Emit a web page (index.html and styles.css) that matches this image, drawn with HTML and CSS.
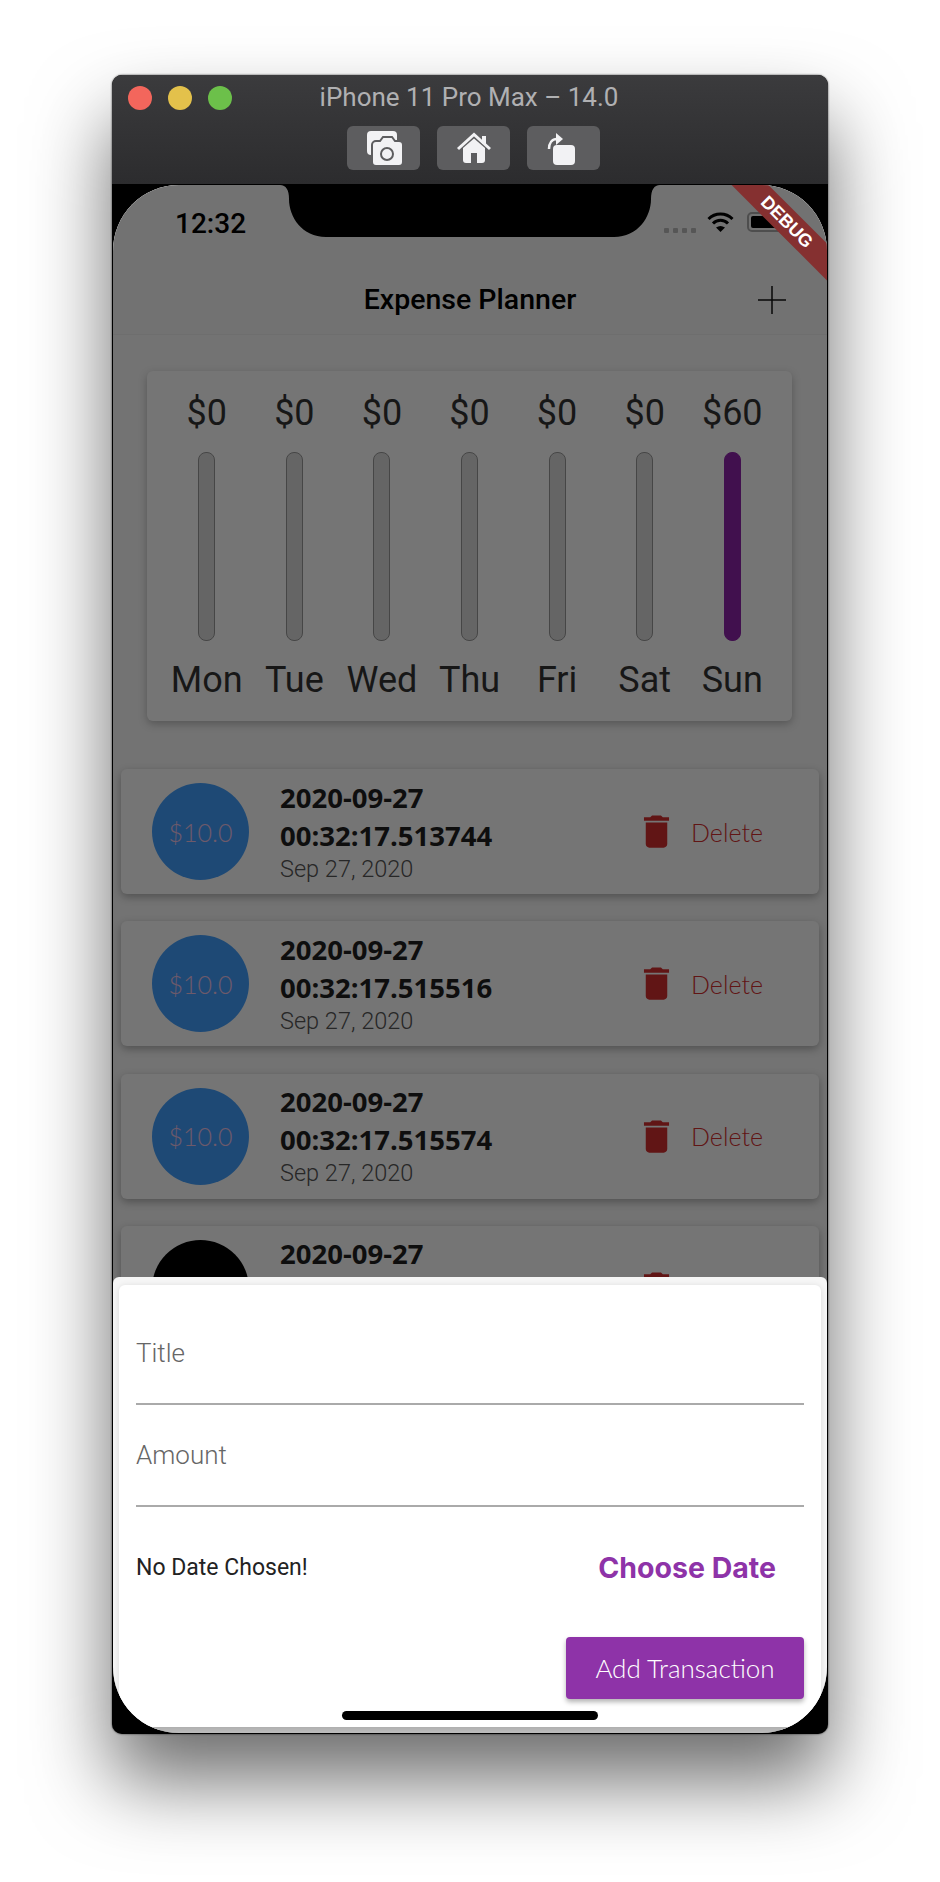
FILE: index.html
```html
<!DOCTYPE html>
<html lang="en">
<head>
    <meta charset="UTF-8">
    <title>iPhone 11 Pro Max – 14.0</title>
    <link rel="stylesheet" href="styles.css">
</head>
<body>
    <div class="window">
        <div class="titlebar">
            <div class="title-row">
                <div class="lights">
                    <span class="light red"></span>
                    <span class="light yellow"></span>
                    <span class="light green"></span>
                </div>
                <div class="sim-name">iPhone 11 Pro Max – 14.0</div>
            </div>
            <div class="sim-buttons">
                <button class="sim-btn">
                    <svg width="73" height="44" viewBox="0 0 73 44">
                        <rect x="20" y="5" width="30" height="24" rx="4" fill="#f2f2f4"/>
                        <path d="M29 15h4l3-4h9l3 4h4a4 4 0 0 1 4 4v17a4 4 0 0 1-4 4H29a4 4 0 0 1-4-4V19a4 4 0 0 1 4-4z" fill="#f2f2f4" stroke="#5d5d5f" stroke-width="2"/>
                        <circle cx="40" cy="28" r="6" fill="none" stroke="#5d5d5f" stroke-width="2"/>
                    </svg>
                </button>
                <button class="sim-btn">
                    <svg width="73" height="44" viewBox="0 0 73 44">
                        <rect x="45" y="10" width="4" height="8" fill="#f2f2f4"/>
                        <path d="M21 23L37 8.500L53 23" fill="none" stroke="#f2f2f4" stroke-width="3"/>
                        <path d="M26 22L37 12.500L48 22V34a3 3 0 0 1-3 3H29a3 3 0 0 1-3-3z" fill="#f2f2f4"/>
                        <rect x="34" y="27" width="6" height="10" fill="#5d5d5f"/>
                    </svg>
                </button>
                <button class="sim-btn">
                    <svg width="73" height="44" viewBox="0 0 73 44">
                        <rect x="26" y="19" width="22" height="20" rx="4" fill="#f2f2f4"/>
                        <path d="M22 23c0-6 3-10 8-10" fill="none" stroke="#f2f2f4" stroke-width="2.500"/>
                        <path d="M29 7l7 6-7 6z" fill="#f2f2f4"/>
                    </svg>
                </button>
            </div>
        </div>

        <div class="screen">
            <div class="status-bar">
                <span class="time">12:32</span>
                <div class="status-right">
                    <div class="signal"><i></i><i></i><i></i><i></i></div>
                    <svg class="wifi" width="27" height="20" viewBox="0 0 27 20">
                        <path d="M1.500 7A17 17 0 0 1 25.500 7" fill="none" stroke="#000" stroke-width="3"/>
                        <path d="M6 11.500A10.500 10.500 0 0 1 21 11.500" fill="none" stroke="#000" stroke-width="3"/>
                        <path d="M13.500 20L9 15.500Q13.500 12.500 18 15.500z" fill="#000"/>
                    </svg>
                    <div class="battery"><div class="battery-fill"></div></div>
                </div>
            </div>

            <header class="app-bar">
                <div class="app-title">Expense Planner</div>
                <svg class="add-icon" width="28" height="28" viewBox="0 0 28 28">
                    <path d="M14 0V28M0 14H28" stroke="#111" stroke-width="1.500"/>
                </svg>
            </header>

            <section class="chart">
                <div class="chart-col"><span class="amount">$0</span><div class="bar"></div><span class="day">Mon</span></div>
                <div class="chart-col"><span class="amount">$0</span><div class="bar"></div><span class="day">Tue</span></div>
                <div class="chart-col"><span class="amount">$0</span><div class="bar"></div><span class="day">Wed</span></div>
                <div class="chart-col"><span class="amount">$0</span><div class="bar"></div><span class="day">Thu</span></div>
                <div class="chart-col"><span class="amount">$0</span><div class="bar"></div><span class="day">Fri</span></div>
                <div class="chart-col"><span class="amount">$0</span><div class="bar"></div><span class="day">Sat</span></div>
                <div class="chart-col"><span class="amount">$60</span><div class="bar full"></div><span class="day">Sun</span></div>
            </section>

            <section class="tx-list">
                <div class="tx-card">
                    <div class="tx-circle">$10.0</div>
                    <div class="tx-text">
                        <div class="tx-title">2020-09-27<br>00:32:17.513744</div>
                        <div class="tx-date">Sep 27, 2020</div>
                    </div>
                    <div class="tx-delete">
                        <svg width="43" height="43" viewBox="0 0 24 24"><path d="M6 19c0 1.100.9 2 2 2h8c1.100 0 2-.9 2-2V7H6v12zM19 4h-3.500l-1-1h-5l-1 1H5v2h14V4z"/></svg>
                        <span>Delete</span>
                    </div>
                </div>
                <div class="tx-card">
                    <div class="tx-circle">$10.0</div>
                    <div class="tx-text">
                        <div class="tx-title">2020-09-27<br>00:32:17.515516</div>
                        <div class="tx-date">Sep 27, 2020</div>
                    </div>
                    <div class="tx-delete">
                        <svg width="43" height="43" viewBox="0 0 24 24"><path d="M6 19c0 1.100.9 2 2 2h8c1.100 0 2-.9 2-2V7H6v12zM19 4h-3.500l-1-1h-5l-1 1H5v2h14V4z"/></svg>
                        <span>Delete</span>
                    </div>
                </div>
                <div class="tx-card">
                    <div class="tx-circle">$10.0</div>
                    <div class="tx-text">
                        <div class="tx-title">2020-09-27<br>00:32:17.515574</div>
                        <div class="tx-date">Sep 27, 2020</div>
                    </div>
                    <div class="tx-delete">
                        <svg width="43" height="43" viewBox="0 0 24 24"><path d="M6 19c0 1.100.9 2 2 2h8c1.100 0 2-.9 2-2V7H6v12zM19 4h-3.500l-1-1h-5l-1 1H5v2h14V4z"/></svg>
                        <span>Delete</span>
                    </div>
                </div>
                <div class="tx-card">
                    <div class="tx-circle dark">$10.0</div>
                    <div class="tx-text">
                        <div class="tx-title">2020-09-27<br>00:32:17.515600</div>
                        <div class="tx-date">Sep 27, 2020</div>
                    </div>
                    <div class="tx-delete">
                        <svg width="43" height="43" viewBox="0 0 24 24"><path d="M6 19c0 1.100.9 2 2 2h8c1.100 0 2-.9 2-2V7H6v12zM19 4h-3.500l-1-1h-5l-1 1H5v2h14V4z"/></svg>
                        <span>Delete</span>
                    </div>
                </div>
            </section>

            <div class="scrim"></div>

            <div class="sheet">
                <div class="sheet-card">
                    <div class="field">Title</div>
                    <div class="field">Amount</div>
                    <div class="date-row">
                        <span class="no-date">No Date Chosen!</span>
                        <span class="choose-date">Choose Date</span>
                    </div>
                    <div class="submit-row">
                        <button class="submit">Add Transaction</button>
                    </div>
                </div>
            </div>

            <svg class="notch" width="380" height="52" viewBox="0 0 380 52">
                <path d="M0 0C6 0 9 5 9 14C9 32 22 52 46 52H334C358 52 371 32 371 14C371 5 374 0 380 0z" fill="#000"/>
            </svg>
            <div class="debug-banner">DEBUG</div>
            <div class="home-indicator"></div>
        </div>
    </div>
</body>
</html>
```

FILE: styles.css
```css
html, body {
    margin: 0;
    padding: 0;
    background: #fff;
}
body {
    height: 1882px;
    overflow: hidden;
    font-family: Roboto, sans-serif;
}
.window {
    width: 716px;
    margin: 75px 0 0 112px;
    padding-bottom: 1px;
    background: #000;
    border-radius: 10px;
    box-shadow: 0 0 2px rgba(0,0,0,0.8), 0 46px 80px rgba(0,0,0,0.58);
    overflow: hidden;
}

/* simulator chrome */
.titlebar {
    height: 109px;
    box-sizing: border-box;
    background: linear-gradient(#3b3b3d, #2c2c2e);
    padding-top: 11px;
}
.title-row {
    display: grid;
    grid-template-columns: 1fr auto 1fr;
    align-items: center;
    height: 24px;
}
.lights {
    display: flex;
    gap: 16px;
    padding-left: 16px;
}
.light {
    width: 24px;
    height: 24px;
    border-radius: 50%;
}
.red { background: #f3665c; }
.yellow { background: #e3c14b; }
.green { background: #6cc04a; }
.sim-name {
    color: #b0b0b2;
    font-size: 26px;
    line-height: 24px;
    white-space: nowrap;
    margin: -2px 0 0 -2px;
}
.sim-buttons {
    display: flex;
    justify-content: center;
    gap: 17px;
    margin: 16px 0 0 6px;
}
.sim-btn {
    width: 73px;
    height: 44px;
    padding: 0;
    border: none;
    border-radius: 6px;
    background: #5d5d5f;
}
.sim-btn svg {
    display: block;
}

/* phone screen */
.screen {
    position: relative;
    height: 1548px;
    margin: 1px 1px 0;
    background: #fafafa;
    border-radius: 66px;
    overflow: hidden;
}
.status-bar {
    height: 79px;
    box-sizing: border-box;
    padding: 23px 0 0 62px;
    display: flex;
    justify-content: space-between;
    background: #f8f8f8;
}
.time {
    font-size: 28px;
    font-weight: 500;
    line-height: 32px;
    color: #000;
}
.status-right {
    display: flex;
    align-items: flex-start;
    padding-top: 4px;
}
.signal {
    display: flex;
    gap: 4px;
    margin: 16px 11px 0 0;
}
.signal i {
    width: 5px;
    height: 5px;
    border-radius: 1px;
    background: #bbb;
}
.battery {
    width: 44px;
    height: 20px;
    margin: 0 36px 0 13px;
    padding: 2px;
    box-sizing: border-box;
    border: 2px solid #aaa;
    border-radius: 5px;
}
.battery-fill {
    width: 34px;
    height: 100%;
    background: #000;
    border-radius: 2px;
}
.app-bar {
    height: 71px;
    box-sizing: border-box;
    border-bottom: 1px solid #f0f0f0;
    background: #f8f8f8;
    display: flex;
    justify-content: center;
    align-items: center;
    position: relative;
}
.app-title {
    font-size: 28.500px;
    font-weight: 500;
    color: #000;
}
.add-icon {
    position: absolute;
    right: 41px;
    top: 22px;
}

/* weekly chart */
.chart {
    display: flex;
    margin: 36px 35px 0 34px;
    padding: 20px 16px 19px;
    background: #fff;
    border-radius: 6px;
    box-shadow: 0 3px 8px rgba(0,0,0,0.25);
}
.chart-col {
    flex: 1;
    display: flex;
    flex-direction: column;
    align-items: center;
}
.amount, .day {
    font-size: 36px;
    line-height: 44px;
    font-weight: 400;
    color: #000;
    opacity: 0.8;
}
.bar {
    width: 15px;
    height: 187px;
    margin: 17px 0 17px;
    border: 1px solid #999;
    border-radius: 8px;
    background: #dcdcdc;
}
.bar.full {
    background: #8e24aa;
    border-color: #8e24aa;
}

/* transaction list */
.tx-list {
    display: flex;
    flex-direction: column;
    gap: 27.300px;
    margin: 48px 8px 0;
}
.tx-card {
    height: 125px;
    flex-shrink: 0;
    display: flex;
    align-items: center;
    padding-left: 31px;
    background: #fff;
    border-radius: 6px;
    box-shadow: 0 3px 8px rgba(0,0,0,0.3);
}
.tx-circle {
    width: 97px;
    height: 97px;
    flex-shrink: 0;
    border-radius: 50%;
    background: #43a0fe;
    color: #f0c4e8;
    font-family: Lato, sans-serif;
    font-weight: 300;
    font-size: 25px;
    display: flex;
    justify-content: center;
    align-items: center;
}
.tx-circle.dark {
    background: #000;
    color: #555;
}
.tx-text {
    flex: 1;
    margin: -2px 0 0 31px;
}
.tx-title {
    font-family: "Open Sans", sans-serif;
    font-weight: 700;
    font-size: 27.500px;
    line-height: 38px;
    color: #000;
    opacity: 0.87;
}
.tx-date {
    font-size: 23.500px;
    line-height: 28px;
    font-weight: 300;
    color: #555;
}
.tx-delete {
    display: flex;
    align-items: center;
    color: #d32f2f;
    font-family: Lato, sans-serif;
    font-weight: 300;
    font-size: 25px;
    margin-right: 56px;
}
.tx-delete svg {
    fill: #d32f2f;
    margin-right: 13px;
}

/* dim layer and bottom sheet */
.scrim {
    position: absolute;
    inset: 0;
    background: rgba(0,0,0,0.54);
}
.sheet {
    position: absolute;
    left: 0;
    right: 0;
    top: 1092px;
    bottom: 0;
    box-sizing: border-box;
    padding: 8px 6px 0;
    background: #f6f6f6;
    border-bottom: 6px solid #bdbdbd;
    border-radius: 6px 6px 0 0;
}
.sheet-card {
    height: 100%;
    box-sizing: border-box;
    padding: 18px 17px 0;
    background: #fff;
    border-radius: 6px 6px 0 0;
    box-shadow: 0 1px 6px rgba(0,0,0,0.12);
}
.field {
    height: 102px;
    box-sizing: border-box;
    padding-top: 34px;
    border-bottom: 2px solid #aaa;
    font-size: 26px;
    line-height: 32px;
    font-weight: 300;
    color: #666;
}
.date-row {
    height: 121px;
    display: flex;
    justify-content: space-between;
    align-items: center;
}
.no-date {
    font-size: 23px;
    color: #222;
}
.choose-date {
    font-family: Inter, sans-serif;
    font-weight: 700;
    font-size: 28.500px;
    color: #8e33a8;
    padding-right: 28px;
}
.submit-row {
    display: flex;
    justify-content: flex-end;
    margin-top: 9px;
}
.submit {
    width: 238px;
    height: 62px;
    border: none;
    border-radius: 4px;
    background: #8e33a8;
    color: #fff;
    font-family: Lato, sans-serif;
    font-weight: 300;
    font-size: 26px;
    box-shadow: 0 3px 5px rgba(0,0,0,0.3);
}

/* things that sit on top of the app */
.notch {
    position: absolute;
    left: 167px;
    top: 0;
}
.debug-banner {
    position: absolute;
    left: 574px;
    top: 24px;
    width: 200px;
    height: 26px;
    line-height: 26px;
    text-align: center;
    transform: rotate(45deg);
    background: #853030;
    color: #fff;
    font-family: "Liberation Sans", sans-serif;
    font-weight: 700;
    font-size: 18px;
}
.home-indicator {
    position: absolute;
    left: 229px;
    right: 229px;
    bottom: 13px;
    height: 9px;
    border-radius: 5px;
    background: #000;
}
```
